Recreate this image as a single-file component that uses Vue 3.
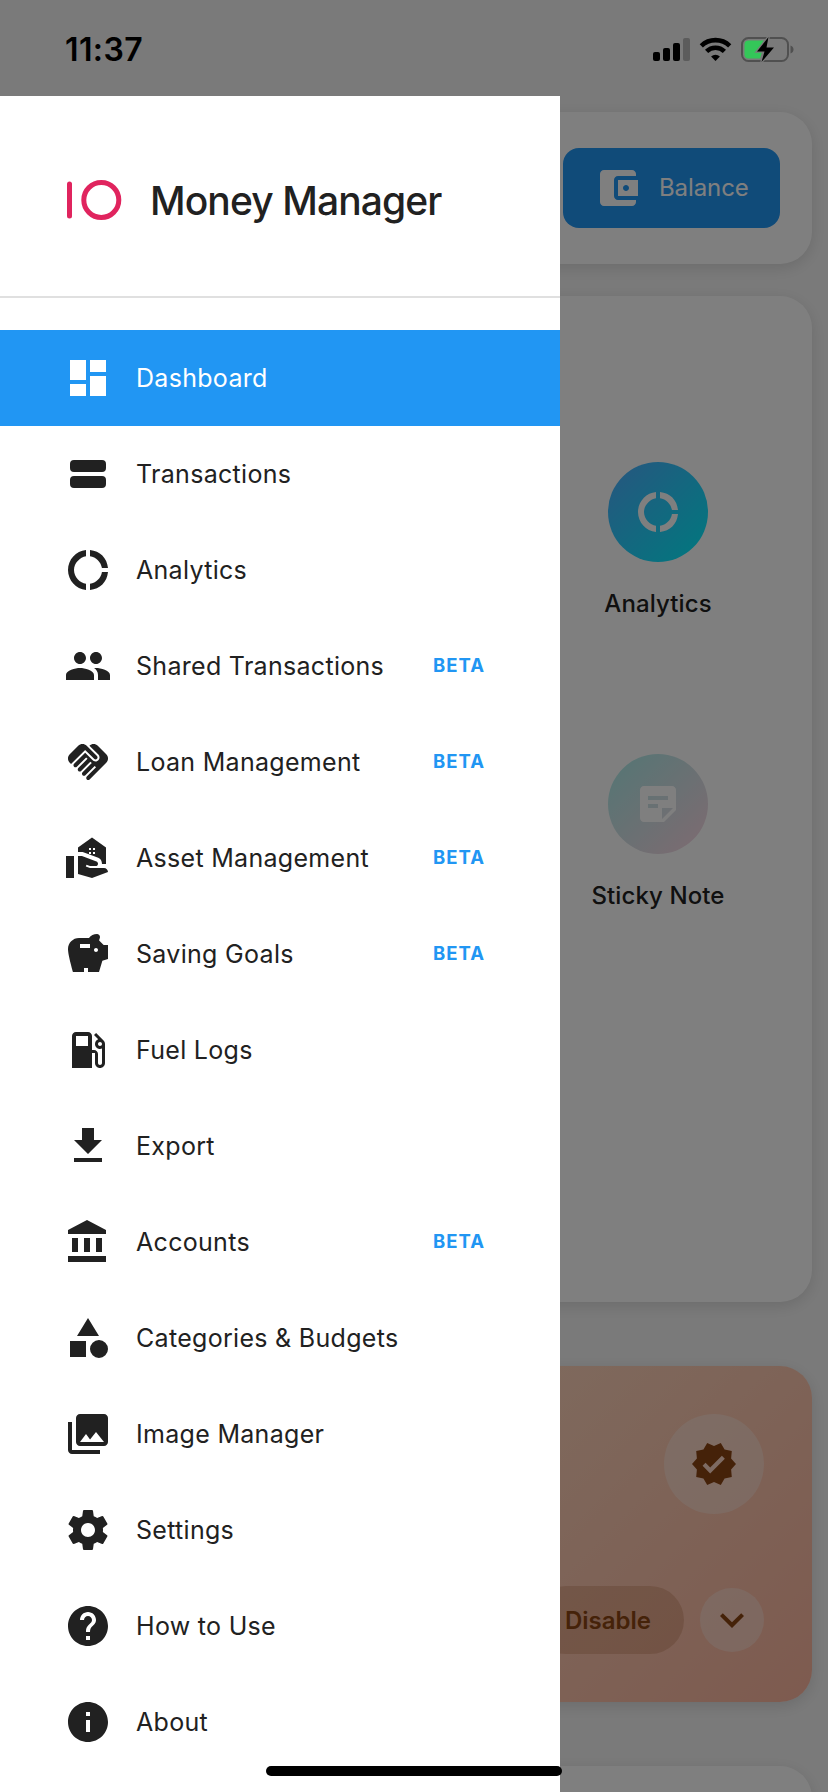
<script setup>
import { ref } from 'vue';

const active = ref('Dashboard');

// 24x24 icon paths
const icons = {
  dashboard: 'M3 13h8V3H3v10zm0 8h8v-6H3v6zm10 0h8V11h-8v10zm0-18v6h8V3h-8z',
  transactions: 'M5 5h14a2 2 0 0 1 2 2v2a2 2 0 0 1-2 2H5a2 2 0 0 1-2-2V7a2 2 0 0 1 2-2zM5 13h14a2 2 0 0 1 2 2v2a2 2 0 0 1-2 2H5a2 2 0 0 1-2-2v-2a2 2 0 0 1 2-2z',
  donut: 'M11 5.08V2c-5 .5-9 4.81-9 10s4 9.5 9 10v-3.08c-3-.48-6-3.4-6-6.92s3-6.44 6-6.92zM18.97 11H22c-.47-5-4-8.53-9-9v3.08C16 5.51 18.54 8 18.97 11zM13 18.92V22c5-.47 8.53-4 9-9h-3.03c-.43 3-2.97 5.49-5.97 5.92z',
  people: 'M16 11c1.66 0 2.99-1.34 2.99-3S17.66 5 16 5s-3 1.34-3 3 1.34 3 3 3zm-8 0c1.66 0 2.99-1.34 2.99-3S9.66 5 8 5 5 6.34 5 8s1.34 3 3 3zm0 2c-2.33 0-7 1.17-7 3.5V19h14v-2.5c0-2.33-4.67-3.5-7-3.5zm8 0c-.29 0-.62.02-.97.05 1.16.84 1.97 1.97 1.97 3.45V19h6v-2.5c0-2.33-4.67-3.5-7-3.5z',
  handshake: 'M16.48 10.41c-.39.39-1.04.39-1.43 0l-4.47-4.46-7.05 7.04-.66-.63c-1.17-1.17-1.17-3.07 0-4.24l4.24-4.24c1.17-1.17 3.07-1.17 4.24 0L16.48 9c.39.39.39 1.02 0 1.41zM17.18 8.29c.78.78.78 2.05 0 2.83-1.27 1.27-2.61.22-2.83 0l-3.76-3.76-5.57 5.57c-.39.39-.39 1.02 0 1.41.39.39 1.02.39 1.42 0l4.62-4.62.71.71-4.62 4.62c-.39.39-.39 1.02 0 1.41.39.39 1.02.39 1.42 0l4.62-4.62.71.71-4.62 4.62c-.39.39-.39 1.02 0 1.41.39.39 1.02.39 1.41 0l4.62-4.62.71.71-4.62 4.62c-.39.39-.39 1.02 0 1.41.39.39 1.02.39 1.41 0l8.32-8.34c1.17-1.17 1.17-3.07 0-4.24l-4.24-4.24c-1.15-1.15-3.01-1.17-4.18-.06l4.47 4.47z',
  estate: 'M1 11h4v11H1zM20 17h-7l-2.09-.73.33-.94L13 16h2.82c.65 0 1.18-.53 1.18-1.18 0-.49-.31-.93-.77-1.11L8.97 11H7v9.02L14 22l8-3c-.01-1.1-.89-2-2-2zM14 1.7l-7 5V9h2.33l7.79 2.88C18.33 12.33 19 13.5 19 15h2V6.7zM13.5 10h-1V9h1zm0-2h-1V7h1zm2 2h-1V9h1zm0-2h-1V7h1z',
  savings: 'M19.83 7.5l-2.27-2.27c.07-.42.18-.81.32-1.15.08-.18.12-.37.12-.58 0-.83-.67-1.5-1.5-1.5-1.64 0-3.09.79-4 2h-5C4.46 4 2 6.46 2 9.5S4.5 21 4.5 21H10v-2h2v2h5.5l1.68-5.59 2.82-.94V7.5h-2.17zM13 9H8V7h5v2zm3 2c-.55 0-1-.45-1-1s.45-1 1-1 1 .45 1 1-.45 1-1 1z',
  fuel: 'M19.77 7.23l.01-.01-3.72-3.72L15 4.56l2.11 2.11c-.94.36-1.61 1.26-1.61 2.33 0 1.38 1.12 2.5 2.5 2.5.36 0 .69-.08 1-.21v7.21c0 .55-.45 1-1 1s-1-.45-1-1V14c0-1.1-.9-2-2-2h-1V5c0-1.1-.9-2-2-2H6c-1.1 0-2 .9-2 2v16h10v-7.5h1.5v5c0 1.38 1.12 2.5 2.5 2.5s2.5-1.12 2.5-2.5V9c0-.69-.28-1.32-.73-1.77zM12 10H6V5h6v5zm6 0c-.55 0-1-.45-1-1s.45-1 1-1 1 .45 1 1-.45 1-1 1z',
  download: 'M19 9h-4V3H9v6H5l7 7 7-7zM5 18v2h14v-2H5z',
  bank: 'M4 10v7h3v-7H4zm6 0v7h3v-7h-3zM2 22h19v-3H2v3zm14-12v7h3v-7h-3zm-4.5-9L2 6v2h19V6l-9.5-5z',
  category: 'M12 2l-5.5 9h11zM17.5 13a4.5 4.5 0 1 0 0 9 4.5 4.5 0 0 0 0-9zM3 13.5h8v8H3z',
  images: 'M22 16V4c0-1.1-.9-2-2-2H8c-1.1 0-2 .9-2 2v12c0 1.1.9 2 2 2h12c1.1 0 2-.9 2-2zm-11-4l2.03 2.71L16 11l4 5H8l3-4zM2 6v14c0 1.1.9 2 2 2h14v-2H4V6H2z',
  settings: 'M19.43 12.98c.04-.32.07-.64.07-.98s-.03-.66-.07-.98l2.11-1.65c.19-.15.24-.42.12-.64l-2-3.46c-.12-.22-.39-.3-.61-.22l-2.49 1c-.52-.4-1.08-.73-1.69-.98l-.38-2.65C14.46 2.18 14.25 2 14 2h-4c-.25 0-.46.18-.49.42l-.38 2.65c-.61.25-1.17.59-1.69.98l-2.49-1c-.23-.09-.49 0-.61.22l-2 3.46c-.13.22-.07.49.12.64l2.11 1.65c-.04.32-.07.65-.07.98s.03.66.07.98l-2.11 1.65c-.19.15-.24.42-.12.64l2 3.46c.12.22.39.3.61.22l2.49-1c.52.4 1.08.73 1.69.98l.38 2.65c.03.24.24.42.49.42h4c.25 0 .46-.18.49-.42l.38-2.65c.61-.25 1.17-.59 1.69-.98l2.49 1c.23.09.49 0 .61-.22l2-3.46c.12-.22.07-.49-.12-.64l-2.11-1.65zM12 15.5c-1.93 0-3.5-1.57-3.5-3.5s1.57-3.5 3.5-3.5 3.5 1.57 3.5 3.5-1.57 3.5-3.5 3.5z',
  help: 'M12 2C6.48 2 2 6.48 2 12s4.48 10 10 10 10-4.48 10-10S17.52 2 12 2zm1 17h-2v-2h2v2zm2.07-7.75l-.9.92C13.45 12.9 13 13.5 13 15h-2v-.5c0-1.1.45-2.1 1.17-2.83l1.24-1.26c.37-.36.59-.86.59-1.41 0-1.1-.9-2-2-2s-2 .9-2 2H8c0-2.21 1.79-4 4-4s4 1.79 4 4c0 .88-.36 1.68-.93 2.25z',
  info: 'M12 2C6.48 2 2 6.48 2 12s4.48 10 10 10 10-4.48 10-10S17.52 2 12 2zm1 15h-2v-6h2v6zm0-8h-2V7h2v2z',
  wallet: 'M21 18v1c0 1.1-.9 2-2 2H5c-1.11 0-2-.9-2-2V5c0-1.1.89-2 2-2h14c1.1 0 2 .9 2 2v1h-9c-1.11 0-2 .9-2 2v8c0 1.1.89 2 2 2h9zm-9-2h10V8H12v8zm4-2.5c-.83 0-1.5-.67-1.5-1.5s.67-1.5 1.5-1.5 1.5.67 1.5 1.5-.67 1.5-1.5 1.5z',
  note: 'M19 3H4.99C3.89 3 3 3.9 3 5v14c0 1.1.89 2 1.99 2H15l6-6V5c0-1.1-.9-2-2-2zM7 8h10v2H7V8zm5 6H7v-2h5v2zm2 5.5V14h5.5L14 19.5z',
  verified: 'M23 12l-2.44-2.79.34-3.69-3.61-.82-1.89-3.2L12 2.96 8.6 1.5 6.71 4.69 3.1 5.5l.34 3.7L1 12l2.44 2.79-.34 3.7 3.61.82L8.6 22.5l3.4-1.47 3.4 1.46 1.89-3.19 3.61-.82-.34-3.69L23 12zm-12.91 4.72l-3.8-3.81 1.48-1.48 2.32 2.33 5.85-5.87 1.48 1.48-7.33 7.35z',
  chevron: 'M16.59 8.59L12 13.17 7.41 8.59 6 10l6 6 6-6z',
};

const menu = [
  { label: 'Dashboard', icon: 'dashboard' },
  { label: 'Transactions', icon: 'transactions' },
  { label: 'Analytics', icon: 'donut' },
  { label: 'Shared Transactions', icon: 'people', beta: true },
  { label: 'Loan Management', icon: 'handshake', beta: true },
  { label: 'Asset Management', icon: 'estate', beta: true },
  { label: 'Saving Goals', icon: 'savings', beta: true },
  { label: 'Fuel Logs', icon: 'fuel' },
  { label: 'Export', icon: 'download' },
  { label: 'Accounts', icon: 'bank', beta: true },
  { label: 'Categories & Budgets', icon: 'category' },
  { label: 'Image Manager', icon: 'images' },
  { label: 'Settings', icon: 'settings' },
  { label: 'How to Use', icon: 'help' },
  { label: 'About', icon: 'info' },
];

const shortcuts = [
  { label: 'Analytics', icon: 'donut', tone: 'blue' },
  { label: 'Sticky Note', icon: 'note', tone: 'pastel' },
];
</script>

<template>
  <div class="screen">
    <!-- Dashboard behind the drawer -->
    <main class="page">
      <section class="card top-card">
        <button class="balance-btn">
          <svg class="icon" viewBox="0 0 24 24"><path :d="icons.wallet" /></svg>
          <span>Balance</span>
        </button>
      </section>

      <section class="card shortcuts">
        <div v-for="s in shortcuts" :key="s.label" class="shortcut">
          <div class="bubble" :class="s.tone">
            <svg class="icon" viewBox="0 0 24 24"><path :d="icons[s.icon]" /></svg>
          </div>
          <span class="shortcut-label">{{ s.label }}</span>
        </div>
      </section>

      <section class="card promo">
        <div class="promo-badge">
          <svg class="icon" viewBox="0 0 24 24"><path :d="icons.verified" /></svg>
        </div>
        <div class="promo-actions">
          <button class="disable-btn">Disable</button>
          <button class="expand-btn">
            <svg class="icon" viewBox="0 0 24 24"><path :d="icons.chevron" /></svg>
          </button>
        </div>
      </section>

      <section class="card next-card"></section>
    </main>

    <div class="scrim"></div>

    <header class="status-bar">
      <span class="time">11:37</span>
      <svg class="status-icons" viewBox="0 0 142 26">
        <rect x="0" y="15" width="7" height="9" rx="2" />
        <rect x="10" y="11" width="7" height="13" rx="2" />
        <rect x="20" y="6" width="7" height="18" rx="2" />
        <rect x="30" y="1" width="7" height="23" rx="2" fill="#5c5c5c" />
        <g fill="none" stroke="#000" stroke-width="4.6">
          <path d="M48.3 8.8a20.5 20.5 0 0 1 28.4 0" />
          <path d="M53.6 14.4a12.8 12.8 0 0 1 17.8 0" />
        </g>
        <path d="M62.5 24l-4.4-4.5a6.4 6.4 0 0 1 8.8 0z" />
        <rect x="89" y="1" width="46" height="23" rx="6.5" fill="none" stroke="#505050" stroke-width="2" />
        <path d="M137.5 8.5c4 1.3 4 6.7 0 8z" fill="#505050" />
        <path d="M95.5 3.5H111L103 15h6l-2 6.500H95.500a4 4 0 0 1-4-4v-10a4 4 0 0 1 4-4z" fill="#34c759" />
        <path d="M115.500 0L104 14.500h7.500L108.500 25 121 10.500h-7.500z" stroke="#7b7b7b" stroke-width="2.5" paint-order="stroke" />
      </svg>
    </header>

    <aside class="drawer">
      <div class="brand">
        <svg class="logo" viewBox="0 0 56 42">
          <rect x="1" y="2.5" width="5" height="37" rx="2.5" fill="#e0245e" />
          <circle cx="35.300" cy="21" r="17.500" fill="none" stroke="#e0245e" stroke-width="5" />
        </svg>
        <h1>Money Manager</h1>
      </div>
      <nav class="menu">
        <a
          v-for="item in menu"
          :key="item.label"
          class="menu-item"
          :class="{ active: item.label === active }"
          @click="active = item.label"
        >
          <svg class="icon" viewBox="0 0 24 24"><path :d="icons[item.icon]" /></svg>
          <span class="menu-label">{{ item.label }}</span>
          <span v-if="item.beta" class="beta">BETA</span>
        </a>
      </nav>
    </aside>

    <div class="home-indicator"></div>
  </div>
</template>

<style>
body {
  margin: 0;
  overflow: hidden;
}
</style>

<style scoped>
.screen {
  position: relative;
  width: 828px;
  height: 1792px;
  overflow: hidden;
  background: #f5f5f5;
  color: #212121;
  font-family: Inter, 'Liberation Sans', sans-serif;
}
button {
  border: none;
  font-family: inherit;
}
.icon {
  width: 48px;
  height: 48px;
  flex-shrink: 0;
  fill: currentColor;
}

/* page */
.page {
  display: flex;
  flex-direction: column;
  padding: 112px 16px 0;
}
.card {
  box-sizing: border-box;
  background: #fff;
  border-radius: 32px;
  box-shadow: 0 4px 16px rgba(0, 0, 0, 0.12);
}
.top-card {
  display: flex;
  align-items: center;
  justify-content: flex-end;
  height: 152px;
  padding: 0 32px;
}
.balance-btn {
  display: flex;
  align-items: center;
  gap: 17px;
  width: 217px;
  height: 80px;
  padding: 0 0 0 31px;
  border-radius: 16px;
  background: #2196f3;
  color: #fff;
  font-size: 24px;
  letter-spacing: -0.1px;
}
.balance-btn span {
  padding-bottom: 2px;
}
.shortcuts {
  display: grid;
  grid-template-columns: repeat(3, 1fr);
  grid-auto-rows: 292px;
  height: 1006px;
  margin-top: 32px;
  padding: 166px 32px 0;
}
.shortcut {
  grid-column: 3;
  display: flex;
  flex-direction: column;
  align-items: center;
  gap: 26px;
}
.bubble {
  display: flex;
  align-items: center;
  justify-content: center;
  width: 100px;
  height: 100px;
  border-radius: 50%;
  color: #fff;
}
.bubble.blue {
  background: linear-gradient(135deg, #4facfe, #00f2fe);
}
.bubble.pastel {
  background: linear-gradient(135deg, #a8edea, #fed6e3);
}
.shortcut-label {
  font-size: 24px;
  font-weight: 500;
  line-height: 32px;
  letter-spacing: 0.1px;
}
.promo {
  display: flex;
  flex-direction: column;
  align-items: flex-end;
  justify-content: space-between;
  height: 336px;
  margin-top: 64px;
  padding: 48px;
  background: linear-gradient(135deg, #ffecd2, #fcb69f);
  color: #8b4513;
}
.promo-badge {
  display: flex;
  align-items: center;
  justify-content: center;
  width: 100px;
  height: 100px;
  border-radius: 50%;
  background: rgba(255, 255, 255, 0.3);
}
.promo-actions {
  display: flex;
  align-items: center;
  gap: 16px;
}
.disable-btn {
  height: 68px;
  padding: 0 33px;
  border-radius: 34px;
  background: rgba(139, 69, 19, 0.2);
  color: #8b4513;
  font-size: 24px;
  font-weight: 600;
}
.expand-btn {
  display: flex;
  align-items: center;
  justify-content: center;
  width: 64px;
  height: 64px;
  padding: 0;
  border-radius: 50%;
  background: rgba(255, 255, 255, 0.3);
  color: #8b4513;
}
.next-card {
  height: 200px;
  margin-top: 64px;
}
.scrim {
  position: absolute;
  inset: 0;
  background: rgba(0, 0, 0, 0.5);
}

/* status bar */
.status-bar {
  position: absolute;
  top: 0;
  left: 0;
  right: 0;
  display: flex;
  align-items: center;
  justify-content: space-between;
  height: 99px;
  padding: 0 33px 0 65px;
  box-sizing: border-box;
  color: #000;
}
.time {
  font-size: 32px;
  font-weight: 600;
  letter-spacing: 0.4px;
}
.status-icons {
  width: 142px;
  height: 26px;
}

/* drawer */
.drawer {
  position: absolute;
  top: 96px;
  left: 0;
  bottom: 0;
  width: 560px;
  background: #fff;
}
.brand {
  display: flex;
  align-items: center;
  gap: 28px;
  height: 202px;
  padding: 8px 0 0 66px;
  box-sizing: border-box;
  border-bottom: 2px solid #e0e0e0;
}
.logo {
  width: 56px;
  height: 42px;
}
h1 {
  margin: 0;
  font-size: 39px;
  font-weight: 450;
  letter-spacing: -0.9px;
}
.menu {
  display: flex;
  flex-direction: column;
  padding-top: 32px;
}
.menu-item {
  display: flex;
  align-items: center;
  height: 96px;
  padding: 0 75px 0 64px;
  cursor: pointer;
}
.menu-item.active {
  background: #2196f3;
  color: #fff;
}
.menu-label {
  flex: 1;
  margin-left: 24px;
  font-size: 25px;
  letter-spacing: 0.3px;
}
.beta {
  padding-bottom: 2px;
  color: #2196f3;
  font-size: 18.5px;
  font-weight: 700;
  letter-spacing: 1px;
}
.home-indicator {
  position: absolute;
  left: 266px;
  bottom: 16px;
  width: 296px;
  height: 10px;
  border-radius: 5px;
  background: #000;
}
</style>
